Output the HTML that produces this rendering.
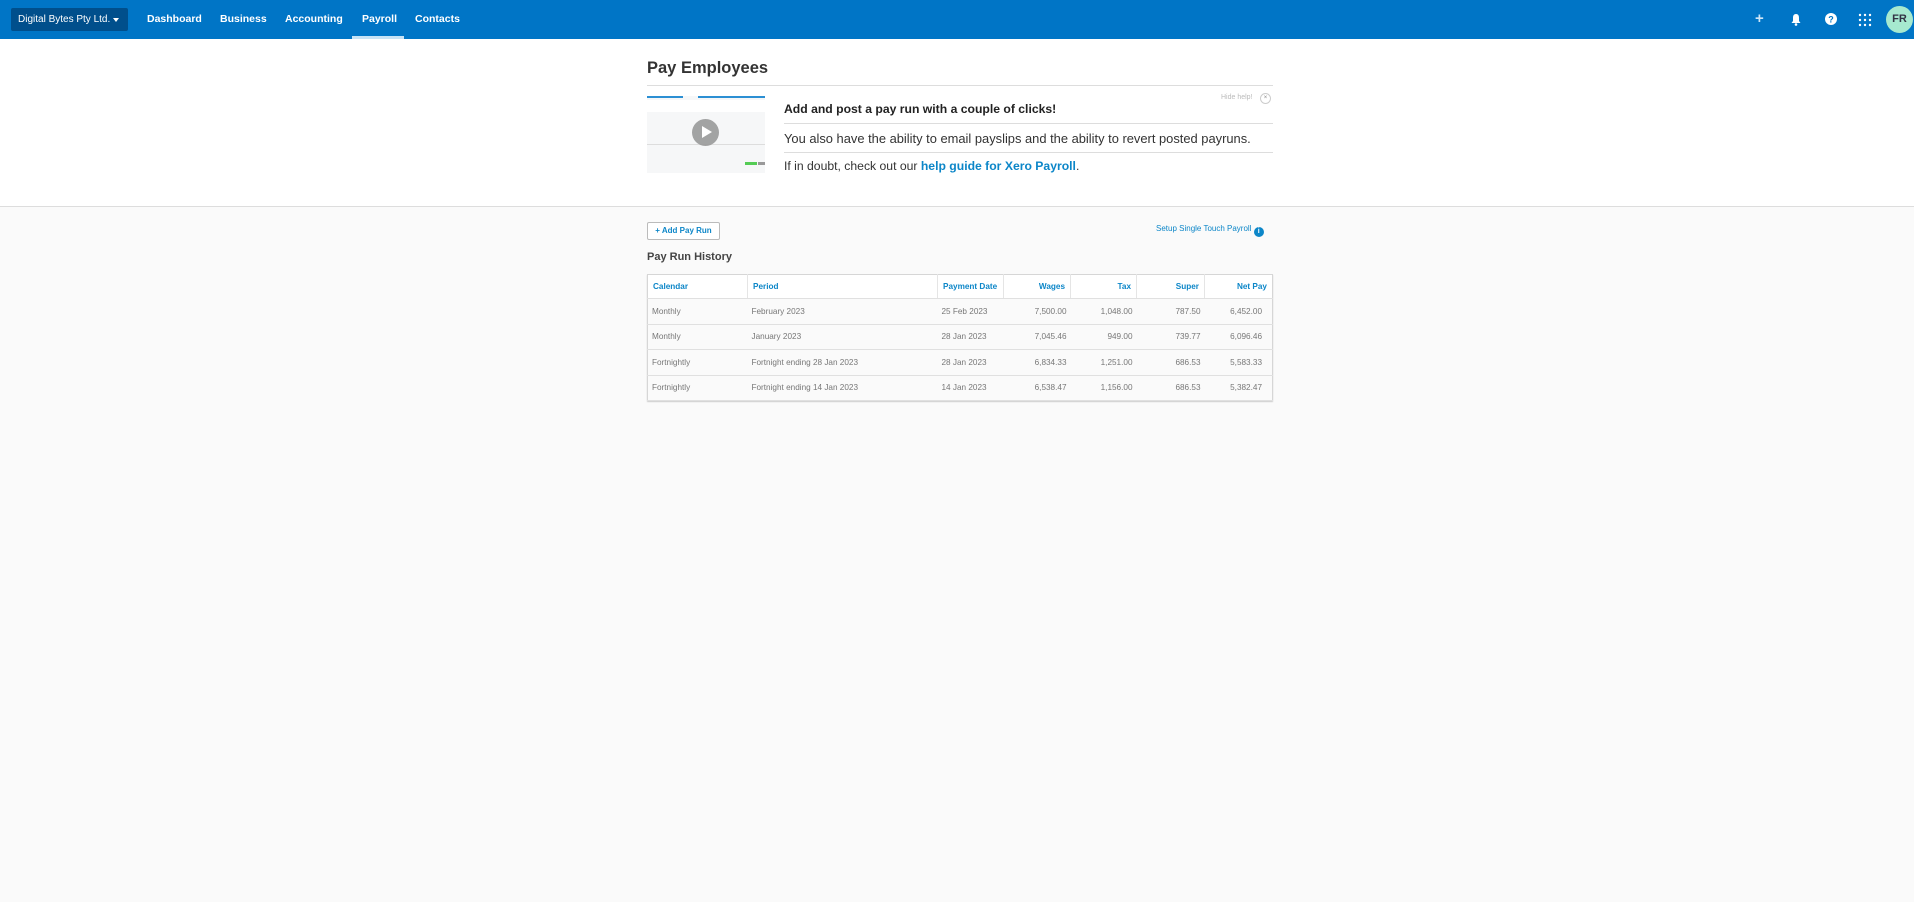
<!DOCTYPE html>
<html><head><meta charset="utf-8"><style>
*{margin:0;padding:0;box-sizing:border-box}
body{width:1914px;height:902px;background:#fafafa;font-family:"Liberation Sans",Arial,sans-serif;position:relative;overflow:hidden}
.nav{position:absolute;left:0;top:0;width:1914px;height:39px;background:#0075c6}
.org{position:absolute;left:11px;top:8px;width:117px;height:23px;background:#004f8c;border-radius:2px;color:#fff;font-size:10px;line-height:23px;padding-left:7px}
.org:after{content:"";position:absolute;right:9px;top:10px;border:3.5px solid transparent;border-top:4px solid #fff;border-bottom:0}
.ni{position:absolute;top:13px;color:#fff;font-size:10.5px;font-weight:bold}
.ul{position:absolute;left:352px;top:36px;width:52px;height:3px;background:#c6e2f5}
.top{position:absolute;left:0;top:39px;width:1914px;height:168px;background:#fff;border-bottom:1px solid #ddd}
.t{position:absolute;color:#333;white-space:nowrap}
.hl{position:absolute;height:1px;background:#ddd}
a{color:#0c86c8;text-decoration:none}
table{position:absolute;left:647px;top:274px;width:626px;table-layout:fixed;border-collapse:collapse;border:1px solid #d6d6d6;background:#fafafa;font-size:8.2px;color:#777;box-shadow:0 1px 1px #ccc;white-space:nowrap}
th{height:24px;color:#0c86c8;font-weight:bold;text-align:left;padding:0 5px;border-left:1px solid #e5e5e5;background:#fff;border-bottom:1px solid #e0e0e0}
td{height:25.5px;padding:0 4px;border-bottom:1px solid #e0e0e0}
.r{text-align:right}
</style></head><body>
<div class="nav">
<div class="org">Digital Bytes Pty Ltd.</div>
<div class="ni" style="left:147px">Dashboard</div>
<div class="ni" style="left:220px">Business</div>
<div class="ni" style="left:285px">Accounting</div>
<div class="ni" style="left:362px">Payroll</div>
<div class="ni" style="left:415px">Contacts</div>
<div class="ul"></div>
<div style="position:absolute;left:1755px;top:10px;color:#cfe6f7;font-size:15px;font-weight:bold">+</div>
<svg style="position:absolute;left:1790px;top:13px" width="12" height="13" viewBox="0 0 12 13"><path d="M6 1C3.5 1 3 3 3 5v3L1.5 10h9L9 8V5C9 3 8.5 1 6 1z" fill="#fff"/><circle cx="6" cy="11.5" r="1.3" fill="#fff"/></svg>
<svg style="position:absolute;left:1825px;top:13px" width="12" height="12" viewBox="0 0 12 12"><circle cx="6" cy="6" r="6" fill="#fff"/><text x="6" y="9.5" text-anchor="middle" font-size="9" font-weight="bold" fill="#0075c6" font-family="Liberation Sans">?</text></svg>
<svg style="position:absolute;left:1858px;top:13px" width="14" height="14"><g fill="#fff"><circle cx="2" cy="2" r="1.2"/><circle cx="7" cy="2" r="1.2"/><circle cx="12" cy="2" r="1.2"/><circle cx="2" cy="7" r="1.2"/><circle cx="7" cy="7" r="1.2"/><circle cx="12" cy="7" r="1.2"/><circle cx="2" cy="12" r="1.2"/><circle cx="7" cy="12" r="1.2"/><circle cx="12" cy="12" r="1.2"/></g></svg>
<div style="position:absolute;left:1886px;top:6px;width:27px;height:27px;border-radius:50%;background:#a6e9cf;color:#334;font-size:11px;font-weight:bold;line-height:27px;text-align:center">FR</div>
</div>
<div class="top">
<div class="t" style="left:647px;top:20px;font-size:16.5px;font-weight:bold">Pay Employees</div>
<div class="hl" style="left:647px;top:46px;width:626px"></div>
<div style="position:absolute;left:647px;top:57px;width:118px;height:77px;background:#f6f7f8">
<div style="position:absolute;left:0;top:0;width:36px;height:2px;background:#2b8fd3"></div>
<div style="position:absolute;left:51px;top:0;width:67px;height:2px;background:#2b8fd3"></div>
<div style="position:absolute;left:0;top:4px;width:118px;height:12px;background:#fff"></div>
<div style="position:absolute;left:0;top:48px;width:118px;height:1px;background:#ddd"></div>
<div style="position:absolute;left:111px;top:66px;width:7px;height:3px;background:#999"></div>
<div style="position:absolute;left:98px;top:66px;width:12px;height:3px;background:#5c5"></div>
<div style="position:absolute;left:45px;top:23px;width:27px;height:27px;border-radius:50%;background:#999;opacity:.9"></div>
<div style="position:absolute;left:55px;top:30px;border-left:10px solid #fff;border-top:6.5px solid transparent;border-bottom:6.5px solid transparent"></div>
</div>
<div class="t" style="left:784px;top:63px;font-size:12.2px;font-weight:bold;color:#222">Add and post a pay run with a couple of clicks!</div>
<div style="position:absolute;left:1221px;top:55px;font-size:7px;color:#bbb">Hide help!</div>
<div style="position:absolute;left:1260px;top:54px;width:11px;height:11px;border:1px solid #ccc;border-radius:50%;font-size:6px;color:#888;text-align:center;line-height:9px">×</div>
<div class="hl" style="left:784px;top:84px;width:489px"></div>
<div class="t" style="left:784px;top:92px;font-size:12.9px">You also have the ability to email payslips and the ability to revert posted payruns.</div>
<div class="hl" style="left:784px;top:113px;width:489px"></div>
<div class="t" style="left:784px;top:120px;font-size:12.2px">If in doubt, check out our <a style="font-weight:bold">help guide for Xero Payroll</a>.</div>
</div>
<div style="position:absolute;left:647px;top:222px;width:73px;height:18px;border:1px solid #bbb;border-radius:2px;background:#fff;font-size:8px;font-weight:bold;color:#0c86c8;text-align:center;line-height:16px">+ Add Pay Run</div>
<div style="position:absolute;left:1156px;top:224px;font-size:8px;color:#0c86c8;white-space:nowrap">Setup Single Touch Payroll <span style="display:inline-block;width:10px;height:10px;border-radius:50%;background:#0c86c8;color:#fff;font-size:7px;font-weight:bold;text-align:center;line-height:10px;vertical-align:-2px">i</span></div>
<div class="t" style="left:647px;top:251px;font-size:11px;font-weight:bold;color:#444">Pay Run History</div>
<table>
<colgroup><col style="width:100px"><col style="width:190px"><col style="width:66px"><col style="width:67px"><col style="width:66px"><col style="width:68px"><col></colgroup>
<tr><th style="border-left:0">Calendar</th><th>Period</th><th>Payment Date</th><th class="r">Wages</th><th class="r">Tax</th><th class="r">Super</th><th class="r">Net Pay</th></tr>
<tr><td>Monthly</td><td>February 2023</td><td>25 Feb 2023</td><td class="r">7,500.00</td><td class="r">1,048.00</td><td class="r">787.50</td><td class="r" style="padding-right:10px">6,452.00</td></tr>
<tr><td>Monthly</td><td>January 2023</td><td>28 Jan 2023</td><td class="r">7,045.46</td><td class="r">949.00</td><td class="r">739.77</td><td class="r" style="padding-right:10px">6,096.46</td></tr>
<tr><td>Fortnightly</td><td>Fortnight ending 28 Jan 2023</td><td>28 Jan 2023</td><td class="r">6,834.33</td><td class="r">1,251.00</td><td class="r">686.53</td><td class="r" style="padding-right:10px">5,583.33</td></tr>
<tr><td>Fortnightly</td><td>Fortnight ending 14 Jan 2023</td><td>14 Jan 2023</td><td class="r">6,538.47</td><td class="r">1,156.00</td><td class="r">686.53</td><td class="r" style="padding-right:10px">5,382.47</td></tr>
</table>
</body></html>
